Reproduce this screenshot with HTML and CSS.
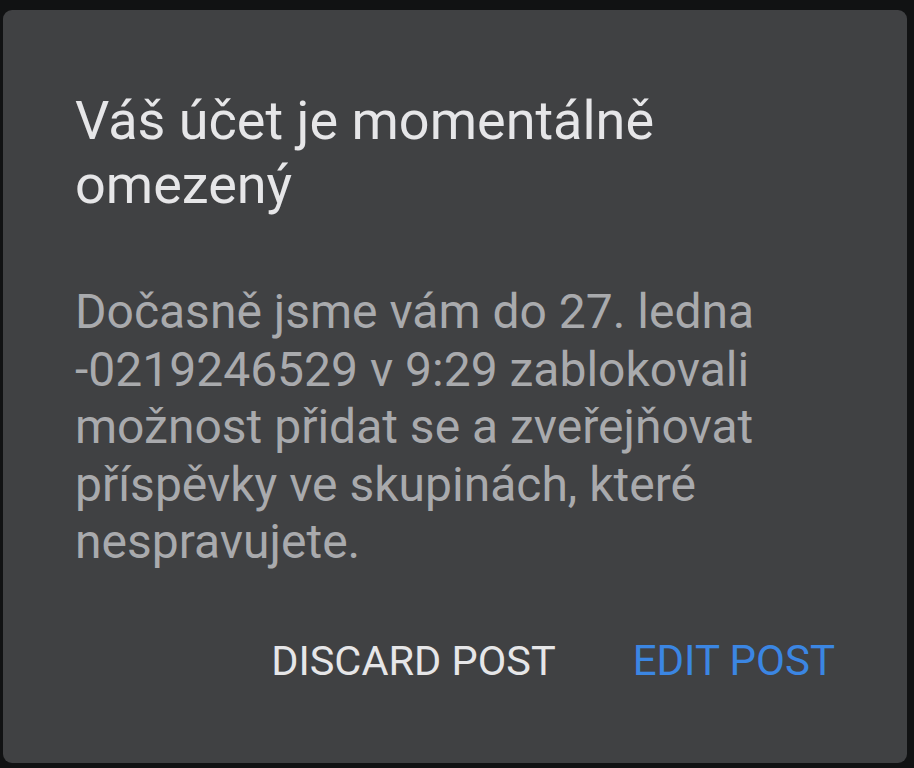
FILE: index.html
```html
<!DOCTYPE html>
<html>
<head>
	<title>Omezený účet</title>
	<link rel="stylesheet" href="styles.css">
</head>
<body>
	<div class="dialog">
		<h1 class="title">Váš účet je momentálně omezený</h1>
		<p class="message">Dočasně jsme vám do 27. ledna -0219246529 v 9:29 zablokovali možnost přidat se a zveřejňovat příspěvky ve skupinách, které nespravujete.</p>
		<div class="actions">
			<button class="btn discard">DISCARD POST</button>
			<button class="btn edit">EDIT POST</button>
		</div>
	</div>
</body>
</html>
```

FILE: styles.css
```css
html, body {
	margin: 0;
	height: 100%;
}

body {
	background-color: #111213;
	font-family: Roboto, "Noto Sans", sans-serif;
	padding: 10px 7px 5px 3px;
	box-sizing: border-box;
}

.dialog {
	height: 100%;
	box-sizing: border-box;
	background-color: #404143;
	border-radius: 9px;
	padding: 79px 72px 0 72px;
}

.title {
	margin: 0;
	font-size: 54px;
	font-weight: 400;
	line-height: 64px;
	color: #e6e6e8;
	width: 620px;
}

.message {
	margin: 66px 0 0;
	font-size: 48px;
	line-height: 57.5px;
	color: #a9aaad;
}

.actions {
	display: flex;
	justify-content: flex-end;
	align-items: baseline;
	gap: 77px;
	margin-top: 65px;
}

.btn {
	background: none;
	border: 0;
	padding: 0;
	font-family: inherit;
	font-size: 42px;
	line-height: 50px;
	color: #e6e6e8;
}

.btn.discard {
	font-size: 41.5px;
}

.btn.edit {
	color: #3b86e3;
}
```
